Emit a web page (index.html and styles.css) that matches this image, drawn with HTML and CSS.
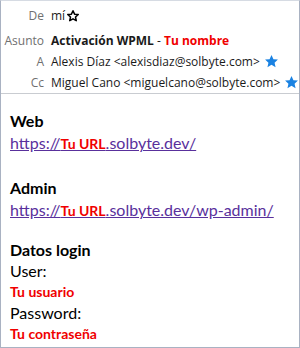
FILE: index.html
```html
<!DOCTYPE html>
<html lang="es">
<head>
    <meta charset="UTF-8">
    <title>Activación WPML</title>
    <link rel="stylesheet" href="styles.css">
</head>
<body>

<div class="mail">
    <div class="mail-header">
        <div class="row row-from">
            <span class="label">De</span>
            <span class="value">mí
                <svg class="star" viewBox="0 0 24 24" width="14" height="14"><path d="M12 3l2.7 5.8 6.3.7-4.7 4.3 1.3 6.2L12 16.8 6.4 20l1.3-6.2L3 9.5l6.3-.7z" fill="none" stroke="#000" stroke-width="2.6" stroke-linejoin="round"/></svg>
            </span>
        </div>
        <div class="row row-subject">
            <span class="label">Asunto</span>
            <span class="subject"><b>Activación WPML</b> - <b class="red">Tu nombre</b></span>
        </div>
        <div class="row">
            <span class="label">A</span>
            <span class="value">Alexis Díaz &lt;alexisdiaz@solbyte.com&gt;
                <svg class="star" viewBox="0 0 24 24" width="15" height="15"><path d="M12 1.5l3.1 6.7 7.2.7-5.4 4.9 1.6 7.2L12 17.3 5.5 21l1.6-7.2-5.4-4.9 7.2-.7z" fill="#1a82e2"/></svg>
            </span>
        </div>
        <div class="row">
            <span class="label">Cc</span>
            <span class="value">Miguel Cano &lt;miguelcano@solbyte.com&gt;
                <svg class="star" viewBox="0 0 24 24" width="15" height="15"><path d="M12 1.5l3.1 6.7 7.2.7-5.4 4.9 1.6 7.2L12 17.3 5.5 21l1.6-7.2-5.4-4.9 7.2-.7z" fill="#1a82e2"/></svg>
            </span>
        </div>
    </div>

    <div class="mail-body">
        <div class="block">
            <div class="title">Web</div>
            <a class="link" href="#">https://<b class="red small">Tu URL</b>.solbyte.dev/</a>
        </div>
        <div class="block">
            <div class="title">Admin</div>
            <a class="link" href="#">https://<b class="red small">Tu URL</b>.solbyte.dev/wp-admin/</a>
        </div>
        <div class="block block-login">
            <div class="title">Datos login</div>
            <div class="line">User:</div>
            <div class="line red small">Tu usuario</div>
            <div class="line">Password:</div>
            <div class="line red small">Tu contraseña</div>
        </div>
    </div>
</div>

</body>
</html>
```

FILE: styles.css
```css
body {
    margin: 0;
    padding: 0;
    background: #fff;
}

.mail {
    width: 300px;
    height: 348px;
    box-sizing: border-box;
    border: 1px solid #a9b2c2;
    border-top-color: #d6dbe3;
    background: #fff;
}

.mail-header {
    padding-top: 4px;
    border-bottom: 1px solid #c9ccd1;
    font-family: "Open Sans", "Noto Sans", sans-serif;
    font-size: 12px;
    color: #1a1a1a;
}

.row {
    display: flex;
    align-items: center;
    height: 21px;
    white-space: nowrap;
}

.row-subject {
    margin-top: 4px;
}

.label {
    width: 43px;
    flex: none;
    text-align: right;
    color: #707070;
    margin-right: 7px;
}

.value {
    display: flex;
    align-items: center;
    gap: 4px;
}

.row-from .value {
    gap: 1px;
}

b {
    font-weight: 700;
}

.red {
    color: #f00000;
}

.mail-body {
    padding: 16px 9px 0;
    font-family: Lato, "Liberation Sans", sans-serif;
    font-size: 16px;
    color: #000;
}

.block {
    margin-bottom: 22px;
    line-height: 22px;
}

.block-login {
    margin-top: -5px;
    line-height: 21px;
}

.title {
    font-weight: 700;
}

.link {
    display: block;
    color: #59309c;
    text-decoration: underline;
}

.small {
    font-size: 14px;
    font-weight: 700;
}
```
